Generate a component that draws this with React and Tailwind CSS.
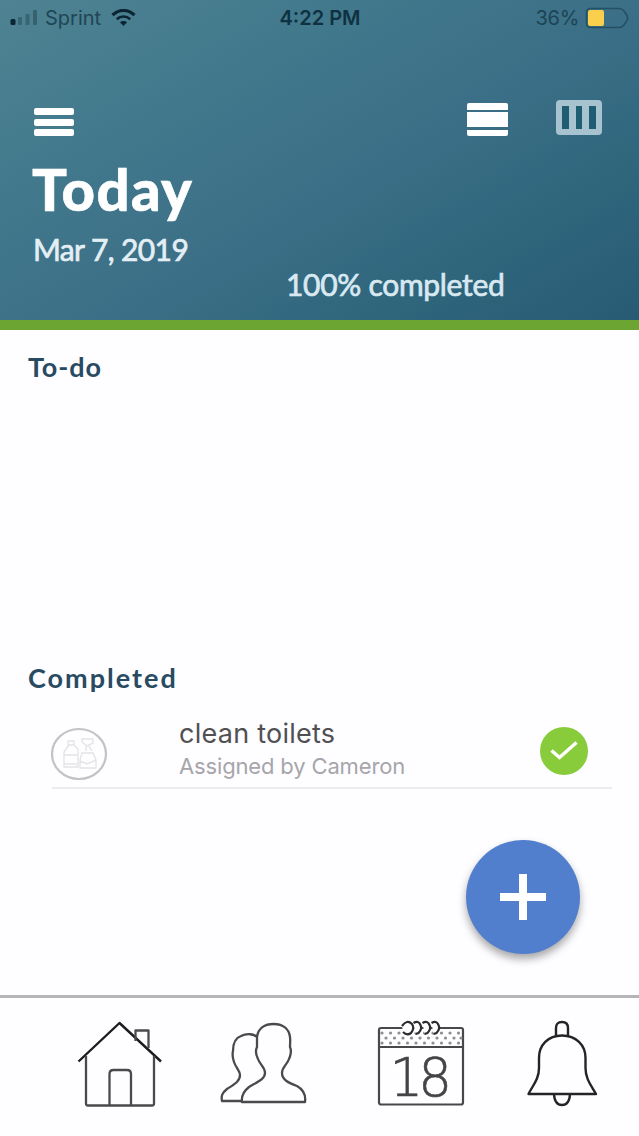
import React from "react";

const tasks = [{ id: 1, title: "clean toilets", assignee: "Cameron", done: true }];

function StatusBar() {
  return (
    <div className="grid h-9 grid-cols-3 items-center pl-[10px] pr-[9px] font-['Inter',sans-serif] text-[20px] leading-none text-[#183c4c]">
      <div className="flex items-center">
        <svg width="30" height="18" viewBox="0 0 30 18">
          <rect x="0.5" y="10" width="5" height="6" rx="1.5" fill="#0b2533" />
          <rect x="8" y="8" width="4" height="8" rx="1" fill="#0b2533" opacity="0.3" />
          <rect x="15.5" y="5" width="4" height="11" rx="1" fill="#0b2533" opacity="0.3" />
          <rect x="23" y="1" width="4" height="15" rx="1" fill="#0b2533" opacity="0.35" />
        </svg>
        <span className="ml-[5px] opacity-85">Sprint</span>
        <svg className="ml-[10px]" width="25" height="18" viewBox="0 0 25 18" fill="none" stroke="#0b2533">
          <path d="M1.5 6.2C8 -0.2 17 -0.2 23.5 6.2" strokeWidth="3.2" />
          <path d="M5.8 10.3C9.6 6.6 15.4 6.6 19.2 10.3" strokeWidth="2.6" />
          <path d="M12.5 17L8.9 13.3C11 11.4 14 11.4 16.1 13.3Z" fill="#0b2533" stroke="none" />
        </svg>
      </div>
      <div className="text-center font-semibold text-[#0f3242]">4:22 PM</div>
      <div className="flex items-center justify-end">
        <span className="tracking-[-0.3px] opacity-85">36%</span>
        <svg className="ml-[6px]" width="45" height="22" viewBox="0 0 45 22" fill="none">
          <path d="M6 1.500H34Q37 1.500 39 4L42 8.500Q43.500 11 42 13.500L39 18Q37 20.500 34 20.500H6Q1.500 20.500 1.500 16V6Q1.500 1.500 6 1.500Z" stroke="#1c4658" strokeWidth="1.6" opacity="0.75" />
          <rect x="3" y="3" width="16" height="16" rx="2" fill="#f9cf4c" />
        </svg>
      </div>
    </div>
  );
}

function Header() {
  return (
    <header className="h-[330px] border-b-[10px] border-[#6da532] bg-[linear-gradient(150deg,#4f8392_0%,#437a8d_25%,#3b6f87_55%,#2f667c_78%,#285a74_100%)] font-['Lato',sans-serif] text-white">
      <StatusBar />
      <div className="mt-16 flex h-9 items-start pl-[34px] pr-[37px]">
        <button className="mt-2 flex flex-col gap-[3.500px]" aria-label="Menu">
          <span className="h-[7px] w-10 rounded-[2px] bg-white" />
          <span className="h-[7px] w-10 rounded-[2px] bg-white" />
          <span className="h-[7px] w-10 rounded-[2px] bg-white" />
        </button>
        <button className="mt-[3px] ml-auto flex flex-col gap-[2.500px]" aria-label="Day view">
          <span className="h-[6.500px] w-[41px] rounded-t-[2px] bg-white" />
          <span className="h-[15px] w-[41px] bg-white" />
          <span className="h-[6.500px] w-[41px] rounded-b-[2px] bg-white" />
        </button>
        <button className="ml-12 grid h-[35px] w-[46px] grid-cols-3 gap-[7px] rounded-[4px] bg-[#a6c3cf] px-[6px] py-[6px]" aria-label="Week view">
          <span className="bg-[#1f5d73]" />
          <span className="bg-[#1f5d73]" />
          <span className="bg-[#1f5d73]" />
        </button>
      </div>
      <h1 className="mt-[23px] h-[60px] pl-[32px] text-[58px] leading-[60px] font-black tracking-[1.400px] [-webkit-text-stroke:0.6px_#fff]">Today</h1>
      <p className="mt-[13px] h-[34px] pl-[33px] text-[30px] leading-[34px] tracking-[-0.600px] text-[#e4eff5] [-webkit-text-stroke:0.7px_#e4eff5]">Mar 7, 2019</p>
      <p className="mt-px h-[34px] pl-[286px] text-[30px] leading-[34px] tracking-[-0.300px] text-[#d9e9f2] [-webkit-text-stroke:0.7px_#d9e9f2]">100% completed</p>
    </header>
  );
}

function ChoreIcon() {
  return (
    <svg width="58" height="54" viewBox="0 0 58 54" fill="none" stroke="#e4e4e6" strokeWidth="1.4">
      <ellipse cx="28" cy="27" rx="27" ry="25" stroke="#c3c3c6" strokeWidth="2.200" />
      <path d="M17 18h6v-4h-6zM15 22l3-4h5l4 4v18H13V25zM13 28h13M13 37h13" />
      <path d="M31 12h11v4l-6 3-5-4zM35 19v5M38 19l3 5M31 26h11l3 7v8H29v-8zM29 34l7 3 9-4" />
    </svg>
  );
}

function TaskRow({ task }) {
  return (
    <li className="mr-[27px] ml-[52px] flex h-[92px] border-b-2 border-[#ebebf0] font-['Inter',sans-serif]">
      <div className="mt-[30px] -ml-[1px] h-[54px] w-[58px]">
        <ChoreIcon />
      </div>
      <div className="ml-[70px] pt-[21px]">
        <p className="text-[27px] leading-[32px] tracking-[0.250px] text-[#505053]">{task.title}</p>
        <p className="text-[22px] leading-[32px] tracking-[-0.150px] text-[#a6a6aa]">Assigned by {task.assignee}</p>
      </div>
      {task.done ? (
        <div className="mt-[30px] mr-6 ml-auto flex size-12 items-center justify-center rounded-full bg-[#88cb3b]">
          <svg width="28" height="20" viewBox="0 0 28 20" fill="none" stroke="#fff" strokeWidth="3.500">
            <path d="M1.500 9.500L9.500 16.500L26.500 1.500" />
          </svg>
        </div>
      ) : null}
    </li>
  );
}

function HomeIcon() {
  return (
    <svg width="86" height="88" viewBox="0 0 86 88" fill="none" stroke="#4a4a4c" strokeWidth="2.300" strokeLinejoin="round">
      <path d="M1.500 41.500L42.500 3L84 41.500" stroke="#1c1c1e" strokeWidth="2.400" />
      <path d="M9 36V83.500Q9 85.500 11 85.500H75Q77 85.500 77 83.500V36" />
      <path d="M58.500 21V10.500H71.500V28" />
      <path d="M32.500 85V54Q32.500 50 36.500 50H50Q54 50 54 54V85" />
    </svg>
  );
}

function PeopleIcon() {
  return (
    <svg width="88" height="86" viewBox="0 0 88 86" fill="none" stroke="#4a4a4c" strokeWidth="2.300" strokeLinejoin="round">
      <path d="M37 17C34 14 27 13 21 16C15 18 13 23 13 31C12 35 13 39 14 42C16 48 20 51 20 55C20 62 13 65 7 69C2 73 1 76 2 81H22" />
      <path d="M53.500 4C62 4 69 8 70 17C70.500 21 70 24 70 27C72 31 70 37 69 39C67 45 62 47 62 53C62 60 69 63 77 66C84 70 86 75 85 82H22C21 75 24 71 29 67C35 63 45 60 45 53C45 47 40 45 38 39C36 35 35 31 37 27V17C38 8 45 4 53.500 4Z" />
    </svg>
  );
}

function CalendarIcon() {
  const dots = [];
  for (let row = 0; row < 3; row++) {
    for (let i = 0; i < 10; i++) {
      dots.push([5 + i * 8.500 + (row % 2) * 4, 13 + row * 5]);
    }
  }

  return (
    <svg width="88" height="96" viewBox="0 0 88 96" fill="none" stroke="#48484a" strokeWidth="2.200">
      <rect x="2" y="8" width="84" height="76.500" rx="2" />
      <path d="M2 27H86" />
      {dots.map(([cx, cy]) => (
        <circle key={`${cx}-${cy}`} cx={cx > 84 ? 84 : cx} cy={cy} r="1.600" fill="#8e8e92" stroke="none" />
      ))}
      {[30, 39.500, 48.500, 57.500].map((cx, i) => (
        <path
          key={cx}
          d={
            i === 0
              ? "M25 6Q30 -1 35 4Q38 8 34 13Q30 16 26 12"
              : `M${cx - 3} 3Q${cx + 2} 0 ${cx + 4} 5Q${cx + 6} 9 ${cx + 2} 13L${cx - 1} 14`
          }
          fill="#fefdff"
          stroke="#2c2c2e"
        />
      ))}
      <text x="12.500" y="76" fontFamily="DejaVu Sans" fontWeight="200" fontSize="53" letterSpacing="-5" fill="#444446" stroke="#444446" strokeWidth="0.600">
        18
      </text>
    </svg>
  );
}

function BellIcon() {
  return (
    <svg width="72" height="88" viewBox="0 0 72 88" fill="none" stroke="#242426" strokeWidth="2.400" strokeLinejoin="round">
      <path d="M30 16V8Q30 2 36 2Q42 2 42 8V16" />
      <path d="M36 15.500C22 15.500 13 25 13 38V48C13 59 7 65 2.500 74H70C65 65 59.500 59 59.500 48V38C59.500 25 50 15.500 36 15.500Z" />
      <path d="M28 74Q28.500 85 36 85Q43.500 85 44 74" />
    </svg>
  );
}

function TabBar() {
  return (
    <nav className="flex h-[141px] items-start border-t-[3px] border-[#b5b5b7] pt-[22px]">
      <a className="ml-[77px]" aria-label="Home"><HomeIcon /></a>
      <a className="ml-[57px]" aria-label="People"><PeopleIcon /></a>
      <a className="ml-[69px]" aria-label="Calendar"><CalendarIcon /></a>
      <a className="ml-[61px]" aria-label="Alerts"><BellIcon /></a>
    </nav>
  );
}

export default function App() {
  return (
    <div className="flex h-[1136px] w-[639px] flex-col overflow-hidden bg-[#fefdff]">
      <Header />
      <main className="relative flex-1 pt-[17px]">
        <section className="h-[311px]">
          <h2 className="h-10 pl-7 font-['Lato',sans-serif] text-[27px] leading-10 font-bold tracking-[0.900px] text-[#294b62]">To-do</h2>
        </section>
        <section>
          <h2 className="h-[39px] pl-7 font-['Lato',sans-serif] text-[27px] leading-10 font-bold tracking-[2px] text-[#294b62]">Completed</h2>
          <ul>
            {tasks.map((t) => (
              <TaskRow key={t.id} task={t} />
            ))}
          </ul>
        </section>
        <button
          className="absolute right-[59px] bottom-[41px] flex size-[114px] items-center justify-center rounded-full bg-[#527fcd] shadow-[0_5px_8px_rgba(0,0,0,0.35)]"
          aria-label="Add chore"
        >
          <svg width="46" height="46" viewBox="0 0 46 46" stroke="#fff" strokeWidth="8">
            <path d="M23 0V46M0 23H46" />
          </svg>
        </button>
      </main>
      <TabBar />
    </div>
  );
}
